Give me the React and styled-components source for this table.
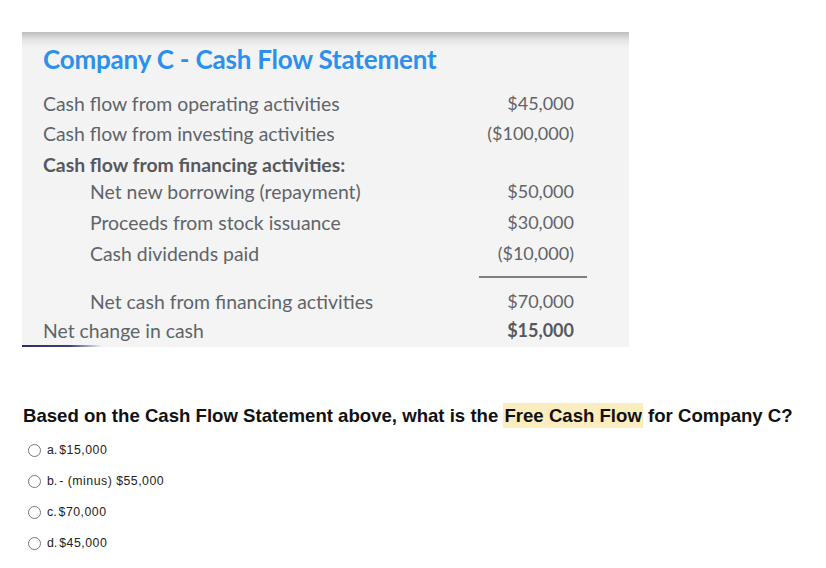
import React from "react";
import styled, { createGlobalStyle } from "styled-components";

const GlobalStyle = createGlobalStyle`
  body {
    margin: 0;
    background: #ffffff;
    font-family: "Liberation Sans", Arial, sans-serif;
  }
`;

const Page = styled.div`
  width: 826px;
  height: 568px;
  padding-top: 32px;
  box-sizing: border-box;
`;

const Panel = styled.div`
  position: relative;
  width: 607px;
  height: 315px;
  margin-left: 22px;
  box-sizing: border-box;
  padding: 11px 55px 0 21px;
  background: linear-gradient(#bdbdbd 0px, #e4e4e4 8px, #f3f3f3 16px, #f4f4f4 100%);
  font-family: Lato, "Open Sans", sans-serif;
  color: #5f6469;
`;

const Underline = styled.div`
  position: absolute;
  left: 0;
  bottom: 0;
  width: 80px;
  height: 2px;
  background: linear-gradient(90deg, #2c2f66 0%, #3c3f7a 60%, rgba(60, 63, 122, 0) 100%);
`;

const Title = styled.div`
  font-size: 26px;
  font-weight: 700;
  color: #2b90ee;
  letter-spacing: -0.2px;
  height: 36px;
  line-height: 32px;
  margin-bottom: 9px;
`;

const Row = styled.div`
  display: flex;
  justify-content: space-between;
  align-items: center;
  height: 30px;
  margin-top: ${(p) => p.$mt || 0}px;
  padding-left: ${(p) => (p.$indent ? 47 : 0)}px;
`;

const Label = styled.span`
  font-size: 19.4px;
  font-weight: ${(p) => (p.$bold ? 700 : 400)};
  color: ${(p) => (p.$bold ? "#55595e" : "#5f6469")};
`;

const Amount = styled.span`
  font-size: 18px;
  font-weight: ${(p) => (p.$bold ? 700 : 400)};
  color: ${(p) => (p.$bold ? "#55595e" : "#5f6469")};
`;

const Rule = styled.div`
  display: flex;
  justify-content: flex-end;
  height: 18px;
  align-items: center;
  margin-right: -13px;
  &::after {
    content: "";
    width: 108px;
    height: 2px;
    background: #7c7f83;
  }
`;

const Question = styled.div`
  margin: 58px 0 0 23px;
  font-size: 18.6px;
  font-weight: 700;
  color: #111;
`;

const Mark = styled.span`
  background: #fcedbf;
  padding: 2px 1px;
`;

const Options = styled.div`
  display: flex;
  flex-direction: column;
  gap: 11px;
  margin: 13px 0 0 28px;
`;

const Option = styled.label`
  display: flex;
  align-items: center;
  gap: 6px;
  height: 20px;
  font-size: 12.3px;
  color: #222;
`;

const Radio = styled.span`
  width: 11px;
  height: 11px;
  border: 1px solid #777;
  border-radius: 50%;
  background: #fff;
`;

const Value = styled.span`
  letter-spacing: 0.5px;
  margin-left: 2px;
`;

const rows = [
  { label: "Cash flow from operating activities", amount: "$45,000" },
  { label: "Cash flow from investing activities", amount: "($100,000)" },
  { label: "Cash flow from financing activities:", bold: true, mt: 1 },
  { label: "Net new borrowing (repayment)", amount: "$50,000", indent: true, mt: -3 },
  { label: "Proceeds from stock issuance", amount: "$30,000", indent: true, mt: 1 },
  { label: "Cash dividends paid", amount: "($10,000)", indent: true, mt: 1 },
];

const options = [
  ["a.", "$15,000"],
  ["b.", "- (minus) $55,000"],
  ["c.", "$70,000"],
  ["d.", "$45,000"],
];

export default function App() {
  return (
    <Page>
      <GlobalStyle />
      <Panel>
        <Title>Company C - Cash Flow Statement</Title>
        {rows.map((r) => (
          <Row key={r.label} $indent={r.indent} $mt={r.mt}>
            <Label $bold={r.bold}>{r.label}</Label>
            {r.amount && <Amount>{r.amount}</Amount>}
          </Row>
        ))}
        <Rule />
        <Row $indent>
          <Label>Net cash from financing activities</Label>
          <Amount>$70,000</Amount>
        </Row>
        <Row $mt={-1}>
          <Label>Net change in cash</Label>
          <Amount $bold>$15,000</Amount>
        </Row>
        <Underline />
      </Panel>
      <Question>
        Based on the Cash Flow Statement above, what is the <Mark>Free Cash Flow</Mark> for
        Company C?
      </Question>
      <Options>
        {options.map(([k, v]) => (
          <Option key={k}>
            <Radio />
            <span>
              {k}
              <Value>{v}</Value>
            </span>
          </Option>
        ))}
      </Options>
    </Page>
  );
}
